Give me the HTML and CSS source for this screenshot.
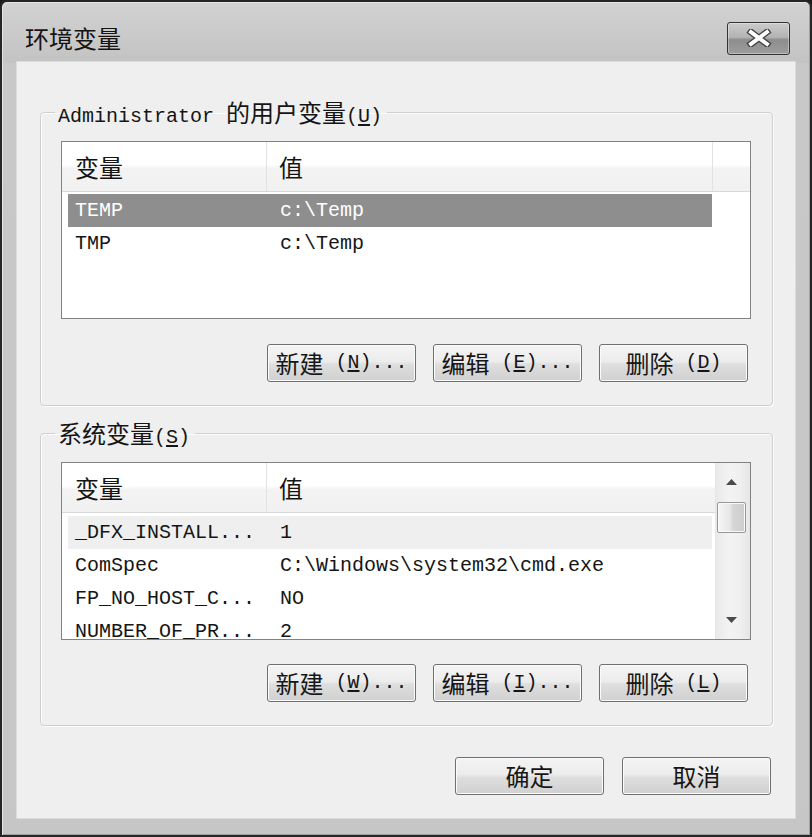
FILE: index.html
```
<!DOCTYPE html>
<html lang="zh-CN">
<head>
<meta charset="utf-8">
<title>环境变量</title>
<link rel="stylesheet" href="styles.css">
</head>
<body>
<div class="window">
  <div class="titlebar">
    <span class="title">环境变量</span>
    <div class="close">
      <svg width="28" height="18" viewBox="0 0 28 18">
        <path d="M6 3 L22 15 M22 3 L6 15" stroke="#3c3c3c" stroke-width="6.5" stroke-linecap="square" fill="none"/>
        <path d="M6 3 L22 15 M22 3 L6 15" stroke="#ffffff" stroke-width="4" stroke-linecap="square" fill="none"/>
      </svg>
    </div>
  </div>
  <div class="client">
    <fieldset class="group">
      <legend>Administrator <span class="c">的用户变量</span>(<u>U</u>)</legend>
      <div class="list">
        <div class="lmain">
          <div class="lhead">
            <div class="hcell h1"><span class="c">变量</span></div>
            <div class="hcell h2"><span class="c">值</span></div>
            <div class="hcell hfill"></div>
          </div>
          <div class="rows">
            <div class="row sel"><span class="cell c1">TEMP</span><span class="cell c2">c:\Temp</span></div>
            <div class="row"><span class="cell c1">TMP</span><span class="cell c2">c:\Temp</span></div>
          </div>
        </div>
      </div>
      <div class="btnrow">
        <div class="btn"><span class="c">新建</span>&nbsp;(<u>N</u>)...</div>
        <div class="btn"><span class="c">编辑</span>&nbsp;(<u>E</u>)...</div>
        <div class="btn"><span class="c">删除</span>&nbsp;(<u>D</u>)</div>
      </div>
    </fieldset>

    <fieldset class="group group2">
      <legend><span class="c">系统变量</span>(<u>S</u>)</legend>
      <div class="list">
        <div class="lmain">
          <div class="lhead">
            <div class="hcell h1"><span class="c">变量</span></div>
            <div class="hcell h2 last"><span class="c">值</span></div>
          </div>
          <div class="rows rows2">
            <div class="row hot"><span class="cell c1">_DFX_INSTALL...</span><span class="cell c2">1</span></div>
            <div class="row"><span class="cell c1">ComSpec</span><span class="cell c2">C:\Windows\system32\cmd.exe</span></div>
            <div class="row"><span class="cell c1">FP_NO_HOST_C...</span><span class="cell c2">NO</span></div>
            <div class="row"><span class="cell c1">NUMBER_OF_PR...</span><span class="cell c2">2</span></div>
          </div>
        </div>
        <div class="vscroll">
          <div class="sbtn">
            <svg width="11" height="6" viewBox="0 0 11 6"><polygon points="5.5,0 11,6 0,6" fill="#4a4a4a"/></svg>
          </div>
          <div class="thumb"></div>
          <div class="track"></div>
          <div class="sbtn">
            <svg width="11" height="6" viewBox="0 0 11 6"><polygon points="0,0 11,0 5.5,6" fill="#4a4a4a"/></svg>
          </div>
        </div>
      </div>
      <div class="btnrow">
        <div class="btn"><span class="c">新建</span>&nbsp;(<u>W</u>)...</div>
        <div class="btn"><span class="c">编辑</span>&nbsp;(<u>I</u>)...</div>
        <div class="btn"><span class="c">删除</span>&nbsp;(<u>L</u>)</div>
      </div>
    </fieldset>

    <div class="footer">
      <div class="btn"><span class="c">确定</span></div>
      <div class="btn"><span class="c">取消</span></div>
    </div>
  </div>
</div>
</body>
</html>
```

FILE: styles.css
```
* { box-sizing: border-box; }
html, body { margin: 0; padding: 0; }
body {
  width: 812px;
  height: 837px;
  overflow: hidden;
  background: #1c1c1c;
  font-family: "Liberation Mono", "Noto Sans CJK SC", monospace;
  color: #151515;
}
.c {
  font-family: "Noto Sans CJK SC", sans-serif;
  font-size: 24px;
}
u { text-decoration: underline; text-underline-offset: 2px; }

.window {
  width: 812px;
  height: 837px;
  border: 2px solid #262626;
  border-radius: 7px 7px 0 0;
  background: linear-gradient(#d2d2d2, #c3c3c3 60px, #c8c8c8 61px, #c6c6c6);
  box-shadow: inset 1px 1px 0 #e4e4e4, inset -1px -1px 0 #a0a0a0;
  display: flex;
  flex-direction: column;
}
.titlebar {
  height: 60px;
  flex: none;
  display: flex;
  align-items: center;
  justify-content: space-between;
  padding: 12px 20px 0 23px;
}
.title {
  font-family: "Noto Sans CJK SC", sans-serif;
  font-size: 24px;
  line-height: 26px;
  color: #141414;
}
.close {
  width: 63px;
  height: 33px;
  border: 1px solid #333;
  border-radius: 3px;
  background: linear-gradient(#cbcbcb, #b3b3b3 46%, #8d8d8d 54%, #9d9d9d);
  box-shadow: inset 0 0 0 1px rgba(255,255,255,0.35);
  display: flex;
  align-items: center;
  justify-content: center;
}

.client {
  flex: none;
  height: 756px;
  margin: 0 15px;
  background: #efefef;
  box-shadow: 0 0 0 1px #dcdcdc;
  padding: 37px 22px 0 23px;
  display: flex;
  flex-direction: column;
}

.group {
  margin: 0;
  min-width: 0;
  padding: 16px 21px 23px 20px;
  border: 1px solid #d0d0d0;
  border-radius: 4px;
  box-shadow: inset 1px 1px 0 #fbfbfb, 1px 1px 0 #fbfbfb;
}
.group2 { margin-top: 14px; padding-bottom: 23px; }
.group legend {
  font-size: 20px;
  line-height: 26px;
  height: 26px;
  padding: 0 5px 0 3px;
  margin-left: -6px;
  color: #151515;
  white-space: nowrap;
}

.list {
  height: 178px;
  border: 1px solid #828282;
  background: #fff;
  display: flex;
  overflow: hidden;
}
.lmain {
  flex: 1;
  min-width: 0;
  display: flex;
  flex-direction: column;
}
.lhead {
  height: 50px;
  flex: none;
  display: flex;
  background: linear-gradient(#ffffff, #ffffff 46%, #f3f3f3 54%, #f1f1f1);
  border-bottom: 1px solid #d8d8d8;
}
.hcell {
  display: flex;
  align-items: center;
  border-right: 1px solid #e2e2e2;
  line-height: 28px;
  color: #141414;
}
.h1 { width: 205px; padding-left: 13px; }
.h2 { flex: 1; padding-left: 12px; }
.h2.last { border-right: none; }
.hfill { width: 37px; border-right: none; }

.rows { padding: 2px 0 0 6px; }
.rows2 { padding-top: 3px; }
.row {
  width: 644px;
  height: 33px;
  flex: none;
  display: flex;
  align-items: center;
  font-size: 20px;
  line-height: 33px;
  white-space: nowrap;
  color: #151515;
}
.row.sel { background: #8e8e8e; color: #fff; }
.row.hot { background: #efefef; }
.cell { display: block; }
.c1 { width: 205px; padding-left: 7px; }
.c2 { padding-left: 7px; }

.vscroll {
  width: 35px;
  flex: none;
  display: flex;
  flex-direction: column;
  background: linear-gradient(90deg, #e9e9e9, #f3f3f3 40%, #f0f0f0 70%, #e6e6e6);
  border-left: 1px solid #e6e6e6;
}
.sbtn {
  height: 38px;
  flex: none;
  display: flex;
  align-items: center;
  justify-content: center;
  padding-right: 3px;
}
.thumb {
  height: 31px;
  flex: none;
  margin: 1px 4px 0 1px;
  border: 1px solid #979797;
  border-radius: 2px;
  background: linear-gradient(90deg, #f6f6f6, #e6e6e6 45%, #d6d6d6 55%, #cdcdcd);
  box-shadow: inset 0 0 0 1px #fafafa;
}
.track { flex: 1; }

.btnrow {
  display: flex;
  justify-content: flex-end;
  gap: 17px;
  margin-top: 25px;
  padding-right: 3px;
}
.group2 .btnrow { margin-top: 24px; }
.btn {
  width: 149px;
  height: 38px;
  border: 1px solid #6f6f6f;
  border-radius: 3px;
  background: linear-gradient(#f4f4f4, #ececec 46%, #dedede 54%, #d0d0d0);
  box-shadow: inset 0 0 0 1px #fbfbfb;
  display: flex;
  align-items: center;
  justify-content: center;
  font-size: 20px;
  line-height: 30px;
  white-space: nowrap;
  color: #161616;
}
.footer {
  display: flex;
  justify-content: flex-end;
  gap: 18px;
  margin-top: 31px;
  padding-right: 2px;
}
```
